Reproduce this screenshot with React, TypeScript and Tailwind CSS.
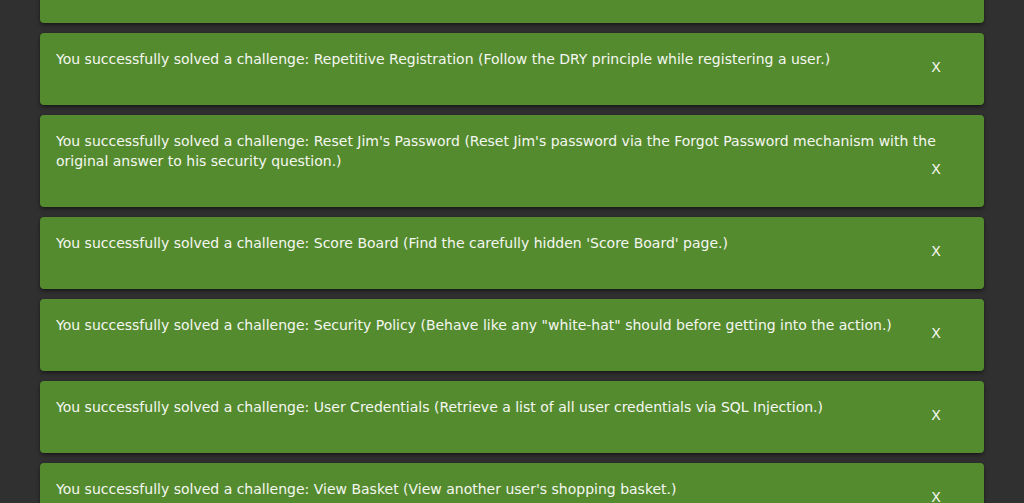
import React from "react";

const challenges = [
  "You successfully solved a challenge: Privacy Policy (Read our privacy policy.)",
  "You successfully solved a challenge: Repetitive Registration (Follow the DRY principle while registering a user.)",
  "You successfully solved a challenge: Reset Jim's Password (Reset Jim's password via the Forgot Password mechanism with the original answer to his security question.)",
  "You successfully solved a challenge: Score Board (Find the carefully hidden 'Score Board' page.)",
  'You successfully solved a challenge: Security Policy (Behave like any "white-hat" should before getting into the action.)',
  "You successfully solved a challenge: User Credentials (Retrieve a list of all user credentials via SQL Injection.)",
  "You successfully solved a challenge: View Basket (View another user's shopping basket.)",
];

const Notification = ({ text, first }: { text: string; first?: boolean }) => {
  return (
    <div
      className={
        "grid grid-cols-1 rounded bg-[#558b2f] px-4 pt-4 pb-4 shadow-[0_3px_5px_-1px_rgba(0,0,0,0.35),0_1px_3px_rgba(0,0,0,0.3)] " +
        (first ? "-mt-[49px]" : "")
      }
    >
      <div className="col-start-1 row-start-1 pb-5 text-[14px] leading-5 text-[#f4f7f1]">{text}</div>
      <button className="col-start-1 row-start-1 mb-1 flex h-9 w-16 items-center justify-center self-end justify-self-end text-[14px] text-[#f4f7f1]">
        X
      </button>
    </div>
  );
};

export default function App() {
  return (
    <div
      className="h-[503px] overflow-hidden bg-[#303030]"
      style={{ fontFamily: '"DejaVu Sans", sans-serif' }}
    >
      <div className="mx-10 flex flex-col gap-[10px]">
        {challenges.map((c, i) => (
          <Notification key={i} text={c} first={i === 0} />
        ))}
      </div>
    </div>
  );
}
